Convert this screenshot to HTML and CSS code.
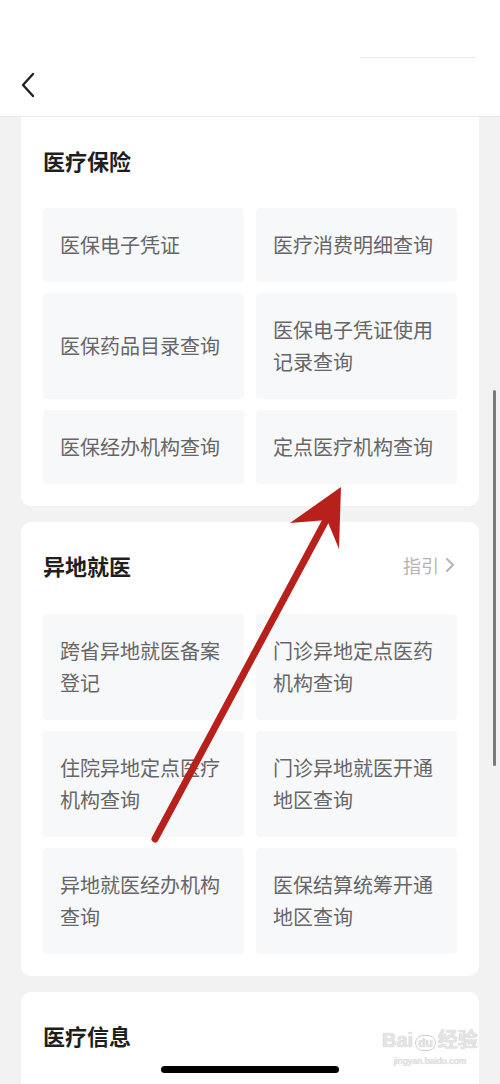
FILE: index.html
```html
<!DOCTYPE html>
<html lang="zh-CN">
<head>
    <meta charset="UTF-8">
    <meta name="viewport" content="width=device-width, initial-scale=1.0">
    <title>医保服务</title>
    <link rel="stylesheet" href="styles.css">
</head>
<body>
    <div class="header">
        <div class="header-line"></div>
        <svg class="back" width="16" height="26" viewBox="0 0 16 26">
            <path d="M13 2 L3 13 L13 24" fill="none" stroke="#222" stroke-width="2.4" stroke-linecap="round" stroke-linejoin="round"/>
        </svg>
    </div>

    <div class="content">
        <div class="card">
            <div class="card-head">
                <h2>医疗保险</h2>
            </div>
            <div class="grid">
                <div class="tile">医保电子凭证</div>
                <div class="tile">医疗消费明细查询</div>
                <div class="tile">医保药品目录查询</div>
                <div class="tile">医保电子凭证使用记录查询</div>
                <div class="tile">医保经办机构查询</div>
                <div class="tile">定点医疗机构查询</div>
            </div>
        </div>

        <div class="card">
            <div class="card-head">
                <h2>异地就医</h2>
                <span class="guide">指引
                    <svg width="10" height="16" viewBox="0 0 10 16">
                        <path d="M2 2 L8 8 L2 14" fill="none" stroke="#b4b4b4" stroke-width="2" stroke-linecap="round" stroke-linejoin="round"/>
                    </svg>
                </span>
            </div>
            <div class="grid">
                <div class="tile">跨省异地就医备案登记</div>
                <div class="tile">门诊异地定点医药机构查询</div>
                <div class="tile">住院异地定点医疗机构查询</div>
                <div class="tile">门诊异地就医开通地区查询</div>
                <div class="tile">异地就医经办机构查询</div>
                <div class="tile">医保结算统筹开通地区查询</div>
            </div>
        </div>

        <div class="card">
            <div class="card-head">
                <h2>医疗信息</h2>
            </div>
            <div class="grid">
                <div class="tile"></div>
                <div class="tile"></div>
            </div>
        </div>
    </div>

    <!-- annotation arrow drawn over the screenshot -->
    <svg class="arrow" width="500" height="1084" viewBox="0 0 500 1084">
        <line x1="155" y1="839" x2="325" y2="522" stroke="#b8201b" stroke-width="7" stroke-linecap="round"/>
        <polygon points="341,487 339,549 327,520 290,523" fill="#b8201b"/>
    </svg>

    <div class="scrollbar"></div>

    <div class="watermark">
        <div class="wm-main">Bai<span class="paw">du</span>经验</div>
        <div class="wm-sub">jingyan.baidu.com</div>
    </div>

    <div class="home-bar"></div>
</body>
</html>
```

FILE: styles.css
```css
* {
    box-sizing: border-box;
}

body {
    margin: 0;
    height: 1084px;
    overflow: hidden;
    background-color: #f2f2f2;
    font-family: "Noto Sans CJK SC", "Noto Sans", sans-serif;
    position: relative;
}

.header {
    height: 117px;
    background-color: #fff;
    border-bottom: 1px solid #e9e9e9;
    position: relative;
    display: flex;
    align-items: flex-end;
    padding: 0 0 18px 20px;
}

.header-line {
    position: absolute;
    top: 57px;
    left: 360px;
    width: 116px;
    height: 1px;
    background-color: #ececec;
}

.content {
    padding: 0 21px;
    display: flex;
    flex-direction: column;
    gap: 16px;
}

.card {
    background-color: #fff;
    border-radius: 0 0 10px 10px;
    padding: 29px 22px 22px 22px;
}

.card + .card {
    border-radius: 10px;
}

.card-head {
    display: flex;
    align-items: center;
    justify-content: space-between;
    margin-bottom: 34px;
}

.card + .card .card-head {
    margin-bottom: 35px;
}

.card-head h2 {
    margin: 0;
    font-size: 22px;
    line-height: 28px;
    font-weight: 700;
    color: #1f1f1f;
}

.guide {
    display: flex;
    align-items: center;
    gap: 6px;
    font-size: 18px;
    color: #b4b4b4;
    margin-right: 2px;
}

.grid {
    display: grid;
    grid-template-columns: 1fr 1fr;
    column-gap: 12px;
    row-gap: 11px;
}

.tile {
    background-color: #f7f8fa;
    border-radius: 4px;
    padding: 21px 20px 21px 17px;
    min-height: 74px;
    font-size: 20px;
    line-height: 32px;
    color: #666;
    display: flex;
    align-items: center;
}

.arrow {
    position: absolute;
    top: 0;
    left: 0;
    pointer-events: none;
}

.scrollbar {
    position: absolute;
    top: 390px;
    left: 493px;
    width: 3px;
    height: 376px;
    border-radius: 2px;
    background-color: #7a7a7a;
}

.watermark {
    position: absolute;
    top: 1028px;
    left: 382px;
    color: #e4e4e4;
    text-shadow: 0 0 1px #bdbdbd;
    text-align: center;
    font-family: "Liberation Sans", "Noto Sans CJK SC", sans-serif;
}

.wm-main {
    font-size: 20px;
    font-weight: 700;
    line-height: 24px;
}

.paw {
    font-size: 12px;
    border: 1px solid #d0d0d0;
    border-radius: 8px;
    padding: 0 2px;
    margin: 0 2px;
}

.wm-sub {
    font-size: 9px;
    line-height: 12px;
}

.home-bar {
    position: absolute;
    top: 1066px;
    left: 161px;
    width: 178px;
    height: 7px;
    border-radius: 4px;
    background-color: #000;
}
```
